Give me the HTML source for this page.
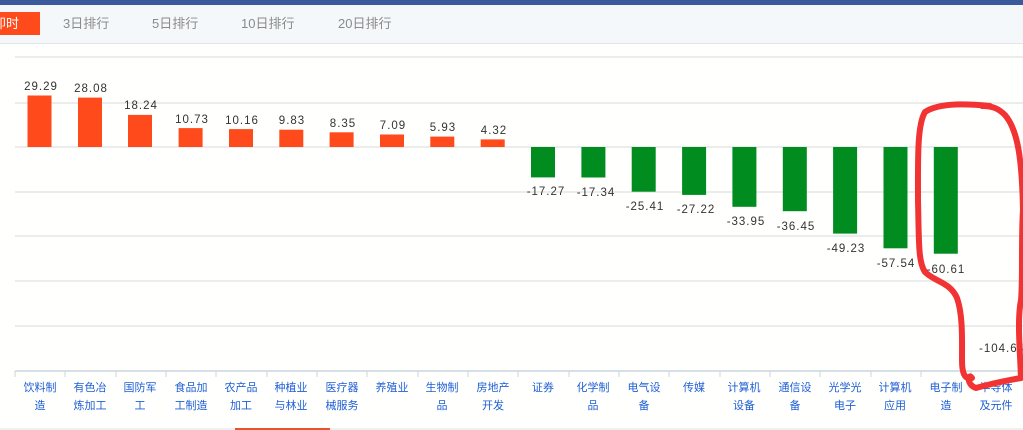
<!DOCTYPE html>
<html><head><meta charset="utf-8"><style>
body{margin:0;width:1023px;height:430px;overflow:hidden;background:#fffffd;font-family:"Liberation Sans","Noto Sans CJK SC",sans-serif;position:relative}
.top{position:absolute;left:0;top:0;width:1023px;height:5px;background:#3b5a9b}
.tabs{position:absolute;left:0;top:5px;width:1023px;height:38px;background:#f5f8fa;border-bottom:1px solid #e3e6e8}
.tab{position:absolute;top:10px;font-size:13px;color:#8a8a8a;line-height:16px}
.act{position:absolute;left:0;top:7px;width:40px;height:23px;background:#ff4a1c;color:#fff;font-size:13px;line-height:23px;overflow:hidden}
.act span{position:absolute;left:-7px;top:0}
</style></head><body>
<div class="top"></div>
<div class="tabs">
<div class="act"><span>即时</span></div>
<div class="tab" style="left:63px;top:11px">3日排行</div>
<div class="tab" style="left:152px;top:11px">5日排行</div>
<div class="tab" style="left:241px;top:11px">10日排行</div>
<div class="tab" style="left:338px;top:11px">20日排行</div>
</div>
<svg width="1023" height="430" style="position:absolute;left:0;top:0" font-family="Liberation Sans, Noto Sans CJK SC, sans-serif">
<g stroke="#e6e6e6" stroke-width="1.5">
<line x1="15" x2="1023" y1="57" y2="57"/><line x1="15" x2="1023" y1="103" y2="103"/><line x1="15" x2="1023" y1="147" y2="147"/><line x1="15" x2="1023" y1="192" y2="192"/><line x1="15" x2="1023" y1="236" y2="236"/><line x1="15" x2="1023" y1="281" y2="281"/><line x1="15" x2="1023" y1="326" y2="326"/>
</g>
<line x1="15" x2="1023" y1="371" y2="371" stroke="#ccd6e0" stroke-width="1.5"/>
<g stroke="#ccd6e0"><line x1="15" x2="15" y1="371" y2="377"/><line x1="65" x2="65" y1="371" y2="377"/><line x1="116" x2="116" y1="371" y2="377"/><line x1="166" x2="166" y1="371" y2="377"/><line x1="216" x2="216" y1="371" y2="377"/><line x1="267" x2="267" y1="371" y2="377"/><line x1="317" x2="317" y1="371" y2="377"/><line x1="367" x2="367" y1="371" y2="377"/><line x1="418" x2="418" y1="371" y2="377"/><line x1="468" x2="468" y1="371" y2="377"/><line x1="518" x2="518" y1="371" y2="377"/><line x1="569" x2="569" y1="371" y2="377"/><line x1="619" x2="619" y1="371" y2="377"/><line x1="669" x2="669" y1="371" y2="377"/><line x1="720" x2="720" y1="371" y2="377"/><line x1="770" x2="770" y1="371" y2="377"/><line x1="820" x2="820" y1="371" y2="377"/><line x1="871" x2="871" y1="371" y2="377"/><line x1="921" x2="921" y1="371" y2="377"/><line x1="971" x2="971" y1="371" y2="377"/></g>
<g fill="#ff4a1c">
<rect x="27.5" y="95.5" width="24" height="51.5"/><rect x="78" y="97.6" width="24" height="49.4"/><rect x="128" y="114.9" width="24" height="32.1"/><rect x="178.6" y="128.1" width="24" height="18.9"/><rect x="229" y="129.1" width="24" height="17.9"/><rect x="279.3" y="129.7" width="24" height="17.3"/><rect x="329.6" y="132.3" width="24" height="14.7"/><rect x="380" y="134.5" width="24" height="12.5"/><rect x="430.3" y="136.6" width="24" height="10.4"/><rect x="480.7" y="139.4" width="24" height="7.6"/>
</g>
<g fill="#008c1e">
<rect x="531" y="147" width="24" height="30.4"/><rect x="581.4" y="147" width="24" height="30.5"/><rect x="631.7" y="147" width="24" height="44.7"/><rect x="682.1" y="147" width="24" height="47.9"/><rect x="732.4" y="147" width="24" height="59.8"/><rect x="782.8" y="147" width="24" height="64.2"/><rect x="833.1" y="147" width="24" height="86.6"/><rect x="883.5" y="147" width="24" height="101.3"/><rect x="933.8" y="147" width="24" height="106.7"/>
</g>
<g font-size="11.5" fill="#333" text-anchor="middle" letter-spacing="1">
<text x="41" y="90">29.29</text><text x="91" y="92">28.08</text><text x="141" y="109">18.24</text><text x="192" y="123">10.73</text><text x="242" y="124">10.16</text><text x="292" y="124">9.83</text><text x="343" y="127">8.35</text><text x="393" y="129">7.09</text><text x="443" y="131">5.93</text><text x="494" y="134">4.32</text>
<text x="546" y="195">-17.27</text><text x="596" y="196">-17.34</text><text x="645" y="210">-25.41</text><text x="696" y="213">-27.22</text><text x="746" y="225">-33.95</text><text x="796" y="230">-36.45</text><text x="846" y="252">-49.23</text><text x="896" y="267">-57.54</text><text x="946" y="273">-60.61</text><text x="1002" y="352">-104.64</text>
</g>
<g font-size="11" fill="#1e5fd6" text-anchor="middle">
<text x="40" y="391">饮料制</text><text x="40" y="409">造</text>
<text x="90" y="391">有色冶</text><text x="90" y="409">炼加工</text>
<text x="140" y="391">国防军</text><text x="140" y="409">工</text>
<text x="191" y="391">食品加</text><text x="191" y="409">工制造</text>
<text x="241" y="391">农产品</text><text x="241" y="409">加工</text>
<text x="291" y="391">种植业</text><text x="291" y="409">与林业</text>
<text x="342" y="391">医疗器</text><text x="342" y="409">械服务</text>
<text x="392" y="391">养殖业</text>
<text x="442" y="391">生物制</text><text x="442" y="409">品</text>
<text x="493" y="391">房地产</text><text x="493" y="409">开发</text>
<text x="543" y="391">证券</text>
<text x="593" y="391">化学制</text><text x="593" y="409">品</text>
<text x="644" y="391">电气设</text><text x="644" y="409">备</text>
<text x="694" y="391">传媒</text>
<text x="744" y="391">计算机</text><text x="744" y="409">设备</text>
<text x="795" y="391">通信设</text><text x="795" y="409">备</text>
<text x="845" y="391">光学光</text><text x="845" y="409">电子</text>
<text x="895" y="391">计算机</text><text x="895" y="409">应用</text>
<text x="946" y="391">电子制</text><text x="946" y="409">造</text>
<text x="996" y="391">半导体</text><text x="996" y="409">及元件</text>
</g>
<rect x="0" y="428" width="1023" height="2" fill="#eef0f2"/>
<rect x="235" y="428" width="95" height="2" fill="#e8532d"/>
<path d="M990 106 C970 104 940 102 925 112 C917 125 918 160 918 200 C919 240 918 262 925 272 C935 282 950 282 957 298 C963 315 962 340 962 360 C962 372 964 380 972 378 M972 378 C968 372 966 385 976 388 C990 384 1010 380 1021 378 C1020 350 1017 320 1021 300 C1023 280 1021 240 1023 210 C1022 160 1018 130 1005 115 C998 108 992 106 982 106" fill="none" stroke="#f23333" stroke-width="6" stroke-linecap="round" stroke-linejoin="round"/>
</svg>
</body></html>
